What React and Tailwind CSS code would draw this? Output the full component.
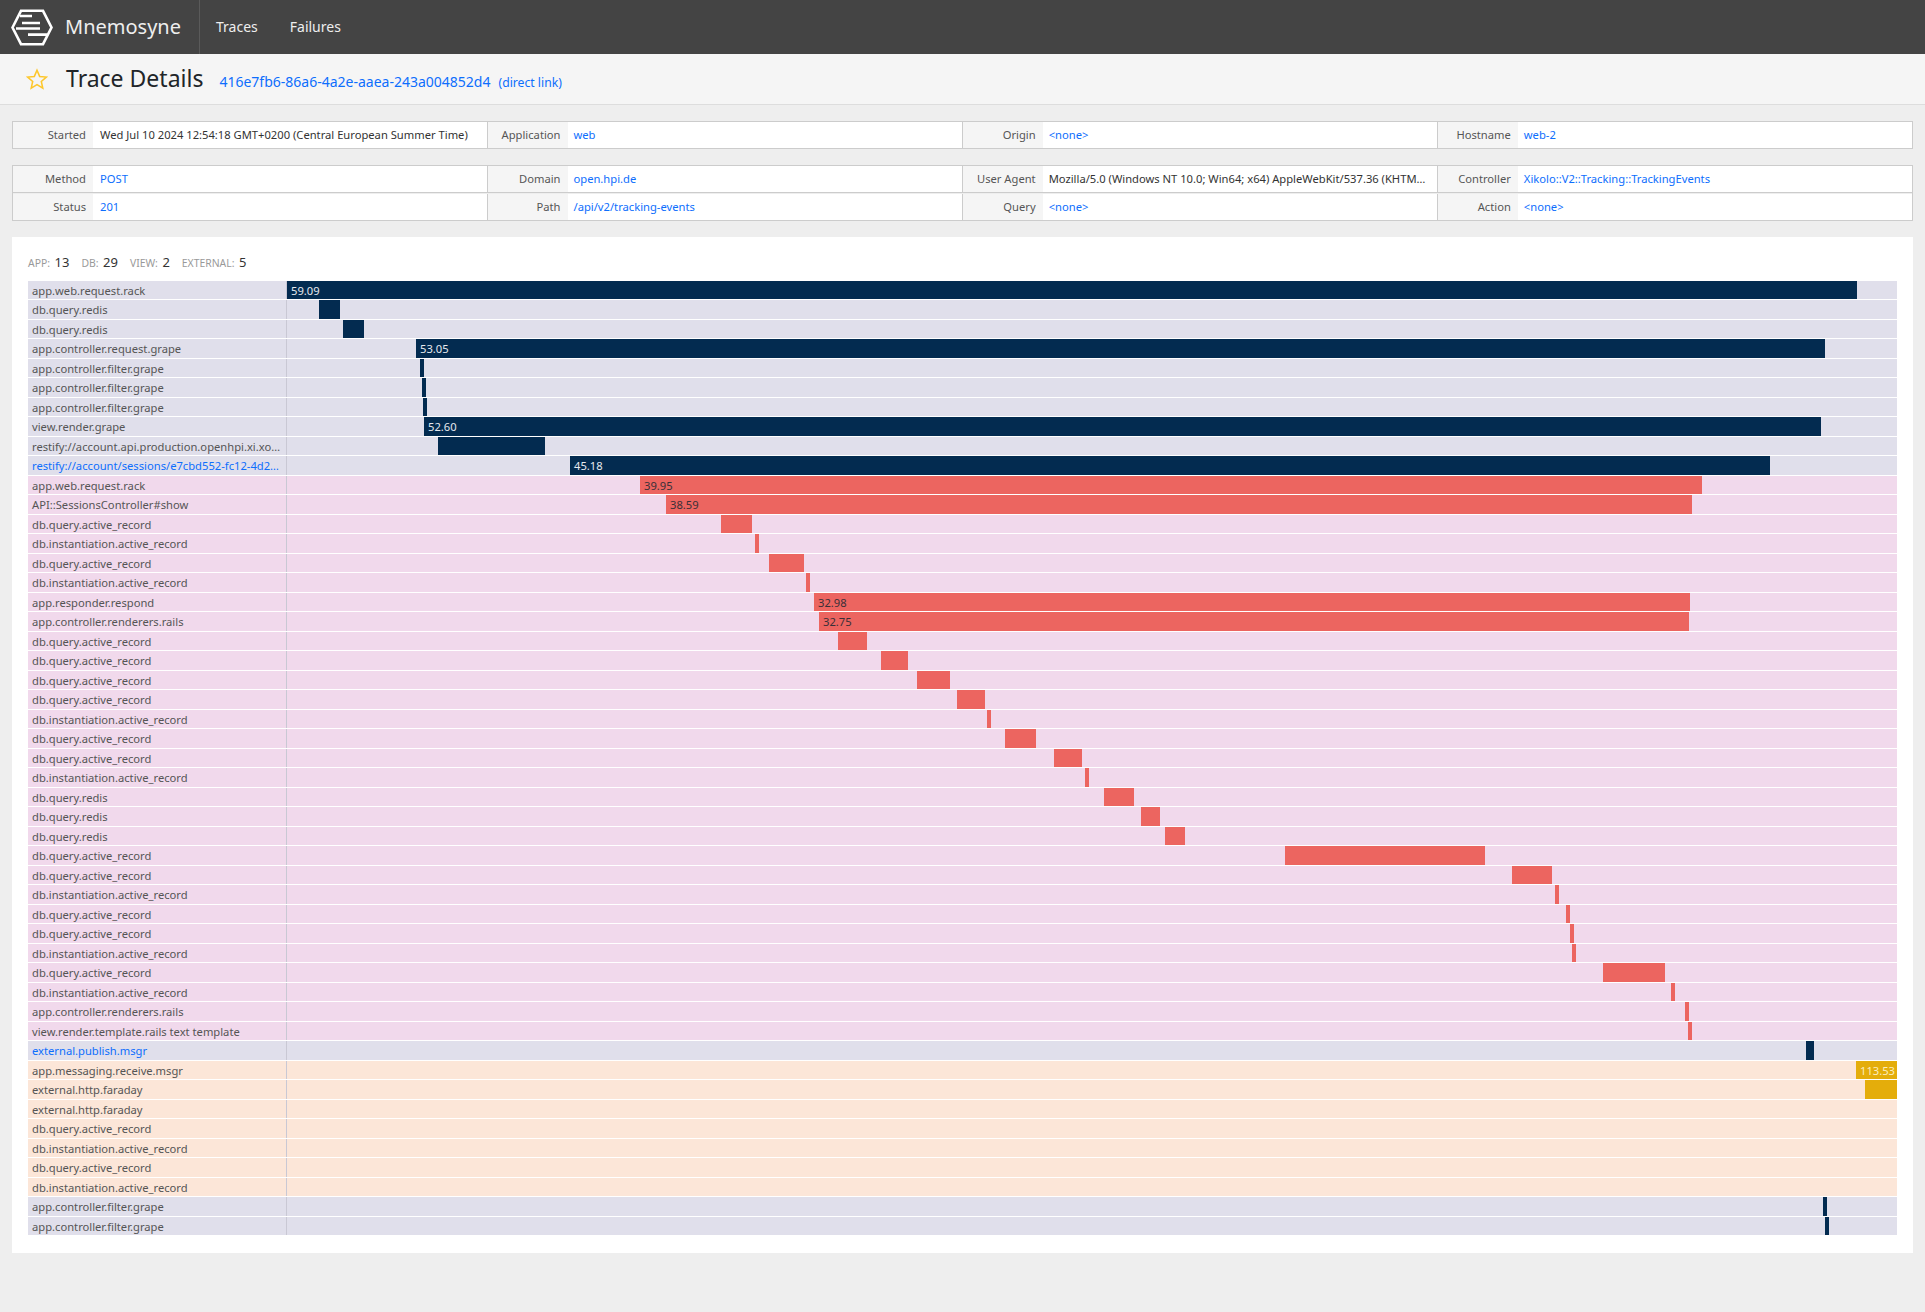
import React from "react";

const X0 = 287;

const rows = [
  ["app.web.request.rack", "a", 287, 1857, "59.09"],
  ["db.query.redis", "a", 319, 340],
  ["db.query.redis", "a", 343, 364],
  ["app.controller.request.grape", "a", 416, 1825, "53.05"],
  ["app.controller.filter.grape", "a", 420, 424],
  ["app.controller.filter.grape", "a", 422, 426],
  ["app.controller.filter.grape", "a", 423, 427],
  ["view.render.grape", "a", 424, 1821, "52.60"],
  ["restify://account.api.production.openhpi.xi.xopic.de/sessions", "a", 438, 545],
  ["restify://account/sessions/e7cbd552-fc12-4d28-a1b2-94f7c1d0", "a", 570, 1770, "45.18", true],
  ["app.web.request.rack", "b", 640, 1702, "39.95"],
  ["API::SessionsController#show", "b", 666, 1692, "38.59"],
  ["db.query.active_record", "b", 721, 752],
  ["db.instantiation.active_record", "b", 755, 759],
  ["db.query.active_record", "b", 769, 804],
  ["db.instantiation.active_record", "b", 806, 810],
  ["app.responder.respond", "b", 814, 1690, "32.98"],
  ["app.controller.renderers.rails", "b", 819, 1689, "32.75"],
  ["db.query.active_record", "b", 838, 867],
  ["db.query.active_record", "b", 881, 908],
  ["db.query.active_record", "b", 917, 950],
  ["db.query.active_record", "b", 957, 985],
  ["db.instantiation.active_record", "b", 987, 991],
  ["db.query.active_record", "b", 1005, 1036],
  ["db.query.active_record", "b", 1054, 1082],
  ["db.instantiation.active_record", "b", 1085, 1089],
  ["db.query.redis", "b", 1104, 1134],
  ["db.query.redis", "b", 1141, 1160],
  ["db.query.redis", "b", 1165, 1185],
  ["db.query.active_record", "b", 1285, 1485],
  ["db.query.active_record", "b", 1512, 1552],
  ["db.instantiation.active_record", "b", 1555, 1559],
  ["db.query.active_record", "b", 1566, 1570],
  ["db.query.active_record", "b", 1570, 1574],
  ["db.instantiation.active_record", "b", 1572, 1576],
  ["db.query.active_record", "b", 1603, 1665],
  ["db.instantiation.active_record", "b", 1671, 1675],
  ["app.controller.renderers.rails", "b", 1685, 1689],
  ["view.render.template.rails text template", "b", 1688, 1692],
  ["external.publish.msgr", "a", 1806, 1814, null, true],
  ["app.messaging.receive.msgr", "c", 1856, 1897, "113.53"],
  ["external.http.faraday", "c", 1865, 1897],
  ["external.http.faraday", "c"],
  ["db.query.active_record", "c"],
  ["db.instantiation.active_record", "c"],
  ["db.query.active_record", "c"],
  ["db.instantiation.active_record", "c"],
  ["app.controller.filter.grape", "a", 1823, 1827],
  ["app.controller.filter.grape", "a", 1825, 1829],
];

const tone = {
  a: { row: "bg-[#e0dfeb]", bar: "bg-[#032b50] text-[#e6e9ee]" },
  b: { row: "bg-[#f1d9ec]", bar: "bg-[#ec6560] text-[#3a3038]" },
  c: { row: "bg-[#fce6d8]", bar: "bg-[#e4ad0b] text-[#fbeebf]" },
};

function Cell({ label, value, link, first }) {
  return (
    <div className={`flex min-w-0 leading-[26px] ${first ? "" : "border-l border-[#ccc]"}`}>
      <div className="w-[80px] shrink-0 bg-[#f5f5f5] pr-[7px] text-right text-[#555]">{label}</div>
      <div
        className={`min-w-0 flex-1 truncate bg-white pr-[7px] ${first ? "pl-[7px]" : "pl-[6px]"} ${
          link ? "text-[#0d6efd]" : "text-[#333]"
        }`}
      >
        {value}
      </div>
    </div>
  );
}

function InfoTable({ rowsData, className }) {
  return (
    <div className={`mx-3 border border-[#ccc] text-[11.2px] ${className}`}>
      {rowsData.map((r, i) => (
        <div
          key={i}
          className={`grid grid-cols-[473.5px_1fr_1fr_1fr] ${i ? "h-[28px] border-t border-[#ccc] pt-[0.5px]" : "h-[26px]"}`}
        >
          {r.map((c, j) => (
            <Cell key={j} first={j === 0} label={c[0]} value={c[1]} link={c[2]} />
          ))}
        </div>
      ))}
    </div>
  );
}

function Logo() {
  return (
    <svg width="42" height="37" viewBox="0 0 42 37" fill="none" stroke="#fff" strokeWidth="2.6" className="shrink-0">
      <path d="M1.5 18.5 L10 1.8 H32 L40.5 18.5 L32 35.2 H10 Z" strokeLinejoin="miter" />
      <path d="M9 7 H21 M11 14 H29 M5 19.5 H29 M17 25.6 H36" />
    </svg>
  );
}

function Star() {
  return (
    <svg width="22" height="22" viewBox="0 0 24 24" fill="none" stroke="#fdc72c" strokeWidth="1.7" strokeLinejoin="miter" className="shrink-0">
      <path d="M12 2.5 L14.9 9.2 L22.2 9.9 L16.7 14.7 L18.3 21.9 L12 18.2 L5.7 21.9 L7.3 14.7 L1.8 9.9 L9.1 9.2 Z" />
    </svg>
  );
}

function Stat({ label, n }) {
  return (
    <span className="flex items-baseline gap-[4.5px]">
      <span className="text-[10.4px] uppercase text-[#999]">{label}:</span>
      <span className="text-[13px] text-[#333]">{n}</span>
    </span>
  );
}

export default function App() {
  return (
    <div className="min-h-screen bg-[#eee] font-['Noto_Sans',sans-serif] text-[#333]">
      <nav className="flex h-[54px] items-stretch bg-[#444] text-[#eee]">
        <div className="flex w-[200px] items-center gap-[12px] border-r border-[#5a5a5a] pl-[11px]">
          <Logo />
          <span className="text-[20px] leading-none">Mnemosyne</span>
        </div>
        <div className="flex items-center gap-[32px] pb-[2px] pl-[16px] text-[14px]">
          <span>Traces</span>
          <span>Failures</span>
        </div>
      </nav>

      <header className="flex h-[51px] items-center border-b border-[#ddd] bg-[#f5f5f5] pl-[26px]">
        <Star />
        <div className="ml-[18px] flex items-baseline pt-[2px]">
          <h1 className="text-[23px] leading-none text-[#212529]">Trace Details</h1>
          <span className="ml-[16px] text-[14px] text-[#0d6efd]">416e7fb6-86a6-4a2e-aaea-243a004852d4</span>
          <span className="ml-[8px] text-[12.2px] text-[#0d6efd]">(direct link)</span>
        </div>
      </header>

      <InfoTable
        className="mt-[16px]"
        rowsData={[
          [
            ["Started", "Wed Jul 10 2024 12:54:18 GMT+0200 (Central European Summer Time)"],
            ["Application", "web", true],
            ["Origin", "<none>", true],
            ["Hostname", "web-2", true],
          ],
        ]}
      />
      <InfoTable
        className="mt-[16px]"
        rowsData={[
          [
            ["Method", "POST", true],
            ["Domain", "open.hpi.de", true],
            ["User Agent", "Mozilla/5.0 (Windows NT 10.0; Win64; x64) AppleWebKit/537.36 (KHTML, like Gecko) Chrome/126.0.0.0"],
            ["Controller", "Xikolo::V2::Tracking::TrackingEvents", true],
          ],
          [
            ["Status", "201", true],
            ["Path", "/api/v2/tracking-events", true],
            ["Query", "<none>", true],
            ["Action", "<none>", true],
          ],
        ]}
      />

      <section className="mx-3 mt-[16px] bg-white px-4 pb-[17.25px] pt-[16px]">
        <div className="flex h-[27.75px] items-start gap-[12px] leading-[19px]">
          <Stat label="App" n="13" />
          <Stat label="DB" n="29" />
          <Stat label="View" n="2" />
          <Stat label="External" n="5" />
        </div>
        <div className="flex flex-col gap-[1px] text-[11.2px]">
          {rows.map(([name, t, s, e, val, link], i) => (
            <div key={i} className={`flex h-[18.5px] ${tone[t].row}`}>
              <div
                className={`w-[259px] shrink-0 truncate border-r border-[#c9c8d4] pl-[4px] pr-[4px] leading-[19.5px] ${
                  link ? "text-[#0d6efd]" : "text-[#555]"
                }`}
              >
                {name}
              </div>
              <div className="flex min-w-0 flex-1">
                {s != null && (
                  <div
                    className={`shrink-0 pl-[4px] leading-[19px] ${tone[t].bar}`}
                    style={{ marginLeft: s - X0, width: e - s }}
                  >
                    {val}
                  </div>
                )}
              </div>
            </div>
          ))}
        </div>
      </section>
    </div>
  );
}
